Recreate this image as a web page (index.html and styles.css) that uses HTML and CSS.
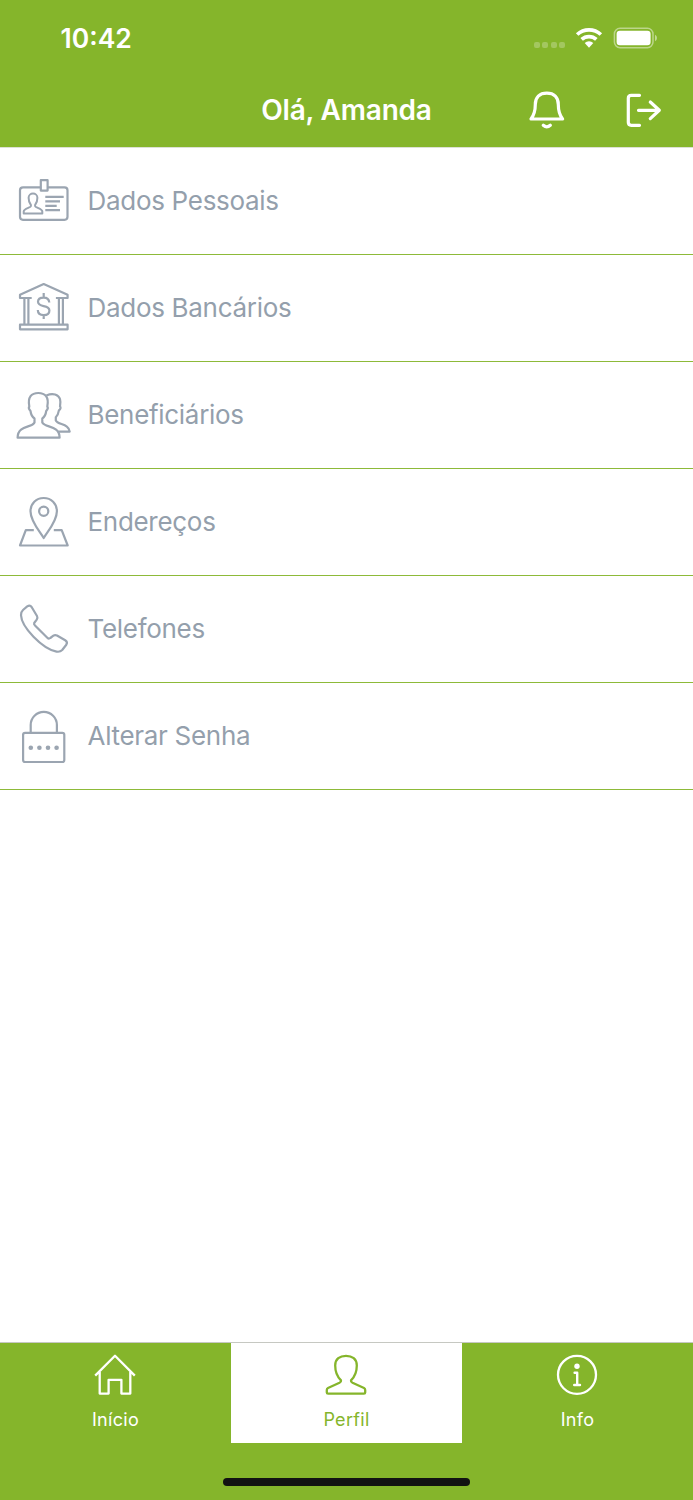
FILE: index.html
```html
<!DOCTYPE html>
<html lang="pt-BR">
<head>
<meta charset="utf-8">
<title>Perfil</title>
<link rel="stylesheet" href="styles.css">
</head>
<body>
<div class="screen">
  <header class="header">
    <div class="status">
      <span class="time">10:42</span>
      <div class="status-icons">
        <div class="signal"><i></i><i></i><i></i><i></i></div>
        <svg class="wifi" width="28" height="22" viewBox="0 0 28 22" fill="#fff">
          <path d="M.9 6.2A19.3 19.3 0 0 1 27.1 6.2L24.6 8.8A15.7 15.7 0 0 0 3.4 8.8Z"/>
          <path d="M5.4 11.1A12.7 12.7 0 0 1 22.6 11.1L20.1 13.7A9.2 9.2 0 0 0 7.9 13.7Z"/>
          <path d="M9.7 16A6.5 6.5 0 0 1 18.3 16L14 20.7Z"/>
        </svg>
        <svg class="battery" width="46" height="22" viewBox="0 0 46 22">
          <rect x="1.4" y="1.3" width="38.6" height="19.4" rx="5.6" fill="none" stroke="#fff" stroke-opacity=".45" stroke-width="1.5"/>
          <rect x="3.6" y="3.8" width="34" height="14.4" rx="3.3" fill="#fff"/>
          <path d="M42 7.7Q44 8.7 44 11T42 14.3Z" fill="#fff" fill-opacity=".5"/>
        </svg>
      </div>
    </div>
    <div class="nav">
      <h1 class="title">Olá, Amanda</h1>
      <div class="actions">
        <svg width="36" height="40" viewBox="0 0 36 40" class="line-icon">
          <path d="M2 29C5.5 24.5 6.3 20.5 6.3 14.5C6.3 7.5 10.5 3.2 17.8 3.2S29.3 7.5 29.3 14.5C29.3 20.5 30.1 24.5 33.6 29Z"/>
          <path d="M14.3 35.3Q17.8 38.5 21.3 35.3"/>
        </svg>
        <svg width="38" height="40" viewBox="0 0 38 40" class="line-icon">
          <path d="M15.5 5.3H7.3Q4.3 5.3 4.3 8.3V32.3Q4.3 35.3 7.3 35.3H15.5M14.5 20.3H35.3M26.3 12L35.3 20.3L26.3 28.6"/>
        </svg>
      </div>
    </div>
  </header>

  <main class="menu">
    <a class="row">
      <svg class="icon" viewBox="0 0 58 58">
        <path d="M26 14.3H8Q5 14.3 5 17.3V43.8Q5 46.8 8 46.8H49.5Q52.5 46.8 52.5 43.8V17.3Q52.5 14.3 49.5 14.3H33"/>
        <rect x="25.8" y="7.2" width="6.8" height="10.4"/>
        <path class="thin" d="M15.9 32C13.7 29.5 13.6 27 13.6 24.8C13.6 19.2 22.4 19.2 22.4 24.8C22.4 27 22.3 29.5 20.1 32V33.2C20.3 34.8 27.3 35.4 27.3 38.6V40.4H8.7V38.6C8.7 35.4 15.7 34.8 15.9 33.2Z"/>
        <path d="M30.3 23.8H48.7M30.3 28.4H45M30.3 32.8H41.7M30.3 37.2H45"/>
      </svg>
      <span class="label">Dados Pessoais</span>
    </a>
    <a class="row">
      <svg class="icon" viewBox="0 0 58 58">
        <path d="M16.7 18H5V14.8L28.7 4.1L52.6 14.8V18H40.9M9.4 18V44.7M13.4 18V44.7M43.9 18V44.7M47.9 18V44.7"/>
        <rect x="5" y="44.7" width="47.6" height="4.6"/>
        <path d="M34.3 22.5C34 19.3 31.8 17.6 28.7 17.6C25.3 17.6 23 19.3 23 21.8C23 28 34.4 24.2 34.4 30.5C34.4 33.5 32 35.2 28.7 35.2C25.2 35.2 22.9 33.3 22.8 30M28.7 13V17.6M28.7 35.2V39"/>
      </svg>
      <span class="label">Dados Bancários</span>
    </a>
    <a class="row">
      <svg class="icon" viewBox="0 0 58 58">
        <path d="M19.5 31.5C16.5 29.5 15.8 26.5 15.5 24C13.7 22 13.5 20.5 14.3 19.5C12.5 10 16.5 6 23.3 6S34.2 10 32.3 19.5C33.2 20.5 33 22 31.2 24C30.9 26.5 30.2 29.5 27.3 31.5V35.5C30 41 44.5 38 44.6 50.7H2.6C2.8 38 17 41 19.5 35.5Z"/>
        <path d="M31.4 8.4C38 5.7 43.5 7.5 45 12C45.7 14.5 45.3 16.5 45 19.2C46 20.3 45.7 22 43.9 23.4C43.5 26 43 28.3 40.8 30.3V33.5C43 38 54 36.5 54.7 44.7H43.3"/>
      </svg>
      <span class="label">Beneficiários</span>
    </a>
    <a class="row">
      <svg class="icon" viewBox="0 0 58 58">
        <path d="M28.7 44C25 37.5 15.5 27.5 15.5 17.2C15.5 9.5 21.2 4 28.7 4S41.9 9.5 41.9 17.2C41.9 27.5 32.4 37.5 28.7 44Z"/>
        <circle cx="28.7" cy="17.2" r="4.6"/>
        <path d="M18.8 36.2H10.8L5 51.5H52.7L46.7 36.2H38.8"/>
      </svg>
      <span class="label">Endereços</span>
    </a>
    <a class="row">
      <svg class="icon" viewBox="0 0 58 58">
        <path d="M12.2 5.4Q15 3.8 16.6 6L22 15Q23 16.8 21.7 18.7L19.2 22C18.8 23 19.2 23.8 20 24.5L32.3 36.7Q33.8 38.2 35.3 37L38.4 34.7Q40 33.6 42 34.5L50.2 39.3Q53 41 51.3 43.8L47.2 49Q45 51.3 41.5 50.6C27 47.5 6.5 26 6 14.2Q5.8 11 8 9Z"/>
      </svg>
      <span class="label">Telefones</span>
    </a>
    <a class="row">
      <svg class="icon" viewBox="0 0 58 58">
        <rect x="8.1" y="24.8" width="41.2" height="29.2" rx="2"/>
        <path d="M15.7 24.8V17A13 13 0 0 1 41.9 17V24.8"/>
        <g class="dots"><circle cx="15.8" cy="39.8" r="2.3"/><circle cx="24.4" cy="39.8" r="2.3"/><circle cx="33" cy="39.8" r="2.3"/><circle cx="41.6" cy="39.8" r="2.3"/></g>
      </svg>
      <span class="label">Alterar Senha</span>
    </a>
  </main>

  <footer class="tabbar">
    <nav class="tabs">
      <a class="tab">
        <svg class="tab-icon" viewBox="0 0 44 44">
          <path d="M2.2 22.6L22 2.7L41.8 22.6M6.7 19V40.6H15.6V26.8H28.4V40.6H37.3V19"/>
        </svg>
        <span>Início</span>
      </a>
      <a class="tab active">
        <svg class="tab-icon" viewBox="0 0 44 44">
          <path d="M17 27.4C17.3 28.8 16.7 29.2 15.5 29.8L4 35Q2.8 35.6 2.8 37V39.4Q2.8 40.7 4.1 40.7H39.9Q41.2 40.7 41.2 39.4V37Q41.2 35.6 40 35L28.5 29.8C27.3 29.2 26.7 28.8 27 27.4C31.5 23 32.8 18 32.8 12.5C32.8 6 28.2 2.8 22 2.8S11.2 6 11.2 12.5C11.2 18 12.5 23 17 27.4Z"/>
        </svg>
        <span>Perfil</span>
      </a>
      <a class="tab">
        <svg class="tab-icon" viewBox="0 0 44 44">
          <circle cx="22" cy="21.8" r="19"/>
          <circle cx="22" cy="13.2" r="2.7" fill="currentColor" stroke="none"/>
          <path d="M19.6 19.8H22.2V32M19.2 32H25" stroke-width="2.4" stroke-linecap="round"/>
        </svg>
        <span>Info</span>
      </a>
    </nav>
    <div class="home-indicator"></div>
  </footer>
</div>
</body>
</html>
```
FILE: styles.css
```css
* { box-sizing: border-box; }

body {
  margin: 0;
  font-family: Inter, "Liberation Sans", sans-serif;
  background: #fff;
}

.screen {
  width: 693px;
  height: 1500px;
  display: flex;
  flex-direction: column;
  overflow: hidden;
}

.header {
  height: 148px;
  background: #85b52b;
  border-bottom: 1px solid #dce1d4;
  color: #fff;
  flex: none;
}

.status {
  height: 75px;
  padding: 0 34px 0 60.5px;
  display: flex;
  align-items: center;
  justify-content: space-between;
}

.time {
  font-size: 26.5px;
  font-weight: 600;
  line-height: 32px;
}

.status-icons { display: flex; align-items: center; }

.signal { display: flex; gap: 2.5px; padding-top: 14px; margin-right: 10px; }
.signal i { width: 6px; height: 6px; border-radius: 2px; background: rgba(255, 255, 255, .25); }
.wifi { margin-right: 10px; }

.nav {
  height: 70px;
  display: grid;
  grid-template-columns: 1fr auto 1fr;
  align-items: center;
}

.title {
  grid-column: 2;
  margin: 0;
  font-size: 28px;
  font-weight: 600;
  line-height: 36px;
  letter-spacing: -.2px;
  white-space: nowrap;
}

.actions {
  display: flex;
  justify-content: flex-end;
  gap: 59px;
  padding-right: 31px;
}

.line-icon {
  fill: none;
  stroke: #fff;
  stroke-width: 3.2;
  stroke-linecap: round;
  stroke-linejoin: round;
}

.menu { flex: 1; }

.row {
  display: flex;
  align-items: center;
  height: 107px;
  padding-left: 15px;
  border-bottom: 1px solid #8dba39;
  color: #949fac;
}

.icon {
  width: 58px;
  height: 58px;
  margin: 2px 14.5px 0 0;
  fill: none;
  stroke: #9ba5b1;
  stroke-width: 2.2;
  stroke-linejoin: round;
}

.icon .thin { stroke-width: 2; }
.icon .dots { fill: #9ba5b1; stroke: none; }

.label {
  font-size: 26px;
  line-height: 32px;
  letter-spacing: -.3px;
  white-space: nowrap;
}

.tabbar {
  height: 158px;
  border-top: 1px solid #c6c8c2;
  background: #85b52b;
  flex: none;
}

.tabs { display: grid; grid-template-columns: repeat(3, 1fr); height: 100px; }

.tab {
  display: flex;
  flex-direction: column;
  align-items: center;
  padding-top: 10px;
  color: #fff;
  font-size: 18px;
  line-height: 24px;
  letter-spacing: .3px;
}

.tab.active { background: #fff; color: #85b52b; }

.tab-icon {
  width: 44px;
  height: 44px;
  margin: 0 1px 11px 0;
  fill: none;
  stroke: currentColor;
  stroke-width: 2.3;
  stroke-linejoin: round;
}

.home-indicator {
  width: 247px;
  height: 8px;
  margin: 35px auto 0;
  border-radius: 4px;
  background: #121212;
}
```
